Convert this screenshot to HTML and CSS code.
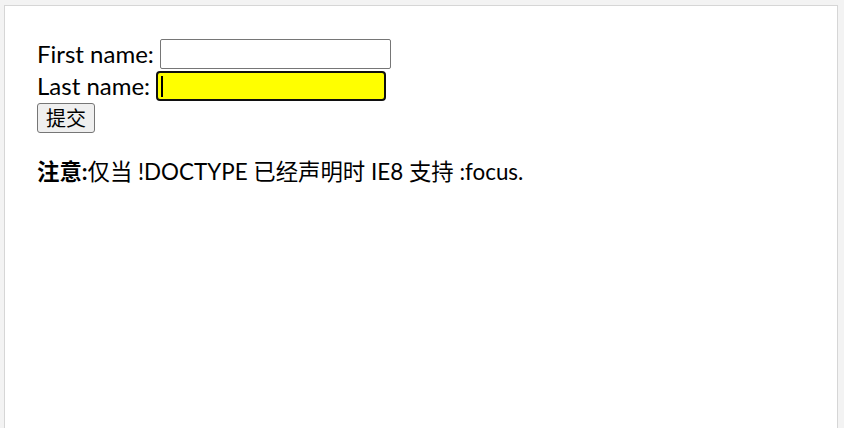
FILE: index.html
```html
<!DOCTYPE html>
<html lang="zh">
<head>
<meta charset="utf-8">
<title>:focus</title>
<link rel="stylesheet" href="styles.css">
</head>
<body>
<div class="panel">
  <form class="form" action="#">
    <div class="row"><label for="fname">First name:</label><input class="field" type="text" id="fname" name="fname"></div>
    <div class="row"><label for="lname">Last name:</label><input class="field field-focus" type="text" id="lname" name="lname"></div>
    <div class="row"><input class="submit" type="submit" value="提交"></div>
  </form>
  <p class="note"><b>注意:</b>仅当 !DOCTYPE 已经声明时 IE8 支持 :focus.</p>
</div>
</body>
</html>
```
FILE: styles.css
```css
html, body {
  margin: 0;
  height: 100%;
}
body {
  background: #f3f3f3;
  font-family: "Segoe UI", Lato, "Noto Sans CJK SC", sans-serif;
  font-size: 24px;
  color: #000;
  overflow: hidden;
}
.panel {
  box-sizing: border-box;
  margin: 5px 6px 0 4px;
  height: calc(100% - 5px);
  background: #fff;
  border: 1px solid #d6d6d6;
  border-bottom: none;
  padding: 32px 32px 0 32px;
}
.form {
  margin: 0;
}
.row {
  height: 32px;
  display: flex;
  align-items: center;
  gap: 6px;
}
.row label {
  line-height: 32px;
}
.field {
  box-sizing: border-box;
  width: 231px;
  height: 30px;
  margin: 0;
  padding: 0 4px;
  border: 1px solid #767676;
  border-radius: 2px;
  background: #fff;
  font-size: 20px;
}
.field-focus {
  width: 230px;
  border: 2px solid #101010;
  border-radius: 4px;
  background: linear-gradient(#000, #000) no-repeat 3px 3px / 2px 21px, #ffff00;
  outline: none;
}
.submit {
  box-sizing: border-box;
  height: 30px;
  width: 58px;
  margin: 0;
  padding: 0;
  border: 1px solid #767676;
  border-radius: 3px;
  background: #efefef;
  font-family: "Noto Sans CJK SC", sans-serif;
  font-size: 20px;
  color: #000;
  line-height: 28px;
}
.note {
  margin: 22px 0 0 0;
  font-size: 22.4px;
  line-height: 32px;
}
.note b {
  font-weight: 700;
}
```
